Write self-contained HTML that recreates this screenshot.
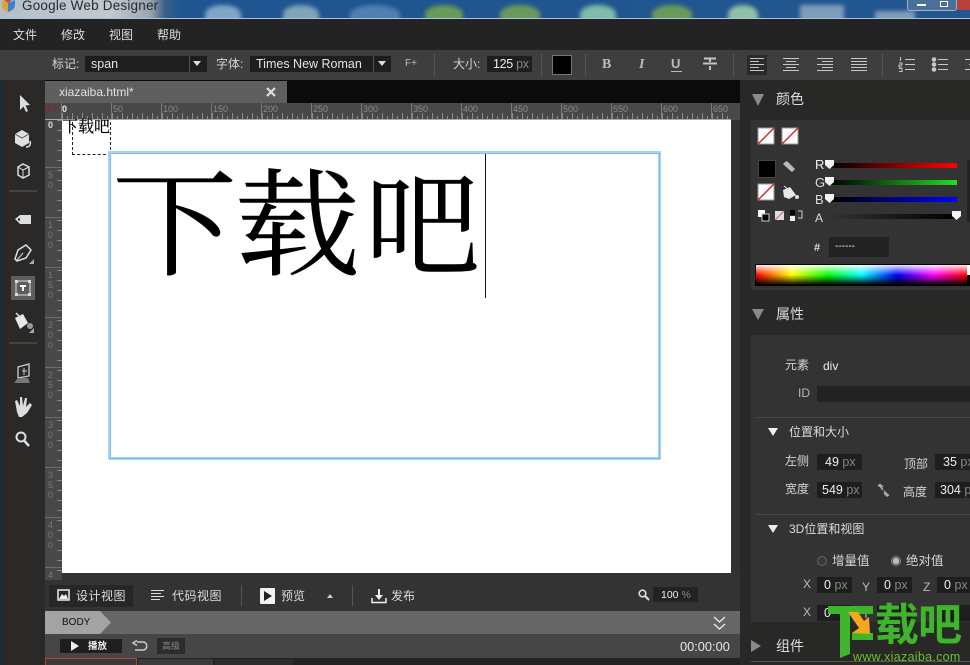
<!DOCTYPE html>
<html><head><meta charset="utf-8"><style>
html,body{margin:0;padding:0;width:970px;height:665px;overflow:hidden;background:#232323}
body{position:relative;font-family:"Liberation Sans","Noto Sans CJK SC",sans-serif;color:#d8d8d8}
.a{position:absolute}
.t{position:absolute;white-space:nowrap;font-size:12px;line-height:14px;color:#d4d4d4}
.f{position:absolute;background:#1e1e1e;color:#eee;font-size:12.5px;line-height:17px;height:16px;white-space:nowrap;overflow:hidden}
.f i{font-style:normal;color:#888}
svg{position:absolute;overflow:visible}
.r{position:absolute;font-size:9px;color:#8a8a8a;line-height:10px;top:104px}
.v{position:absolute;left:47px;width:7px;font-size:9px;line-height:10px;color:#777;text-align:center}
.blob{position:absolute;top:5px;height:18px;border-radius:50% 50% 0 0;filter:blur(2px)}
.big{position:absolute;top:153px;font-family:'Liberation Serif','Noto Serif CJK SC',serif;font-size:125px;line-height:150px;color:#000;transform:scaleY(.93);-webkit-text-stroke:.5px #000}
</style></head><body>
<!-- desktop title strip -->
<div class="a" style="left:0;top:0;width:970px;height:18px;background:linear-gradient(90deg,#b4bfcc 0,#c2c8cf 110px,#9aa6b2 150px,#3a5f85 165px,#1f5590 180px,#1f5590 400px,#23568f 970px);overflow:hidden">
<div class="blob" style="left:205px;width:36px;background:#7ea6c6"></div>
<div class="blob" style="left:283px;width:36px;background:#7ea6b8"></div>
<div class="blob" style="left:350px;width:50px;background:#4f80b0"></div>
<div class="blob" style="left:425px;width:38px;background:#6a9a5a"></div>
<div class="blob" style="left:500px;width:40px;background:#6a9a5a"></div>
<div class="blob" style="left:580px;width:36px;background:#80bca8"></div>
<div class="blob" style="left:652px;width:40px;background:#6a9a5a"></div>
<div class="blob" style="left:728px;width:30px;background:#8fc0a8"></div>
<div class="blob" style="left:800px;width:44px;background:#7f9dbd;border-radius:2px"></div>
<div class="blob" style="left:875px;width:40px;top:11px;background:#7f9dbd;border-radius:2px"></div>
</div>
<div class="a" style="left:0;top:18px;width:970px;height:1px;background:#a8c4dc"></div>
<svg style="left:0;top:0" width="16" height="13"><path d="M2 0L8 3L8 12C4 11 2 8 2 5Z" fill="#d9a82e"/><path d="M8 3L15 0V5C15 8 12 11 8 12Z" fill="#3f7fd0"/><path d="M4 0H12L8 3Z" fill="#d04a38"/></svg>
<div class="t" style="left:22px;top:-2px;font-size:13.5px;line-height:15px;color:#2a2a2a;letter-spacing:.2px">Google Web Designer</div>
<div class="a" style="left:907px;top:0;width:48px;height:10px;background:#4a6f98;border:1px solid #9db3c8;border-top:0;border-radius:0 0 3px 3px"></div>
<div class="a" style="left:957px;top:0;width:13px;height:10px;background:#b8403a"></div>
<div class="a" style="left:917px;top:4px;width:9px;height:2px;background:#fff"></div>
<div class="a" style="left:940px;top:1px;width:6px;height:4px;border:1px solid #fff"></div>

<!-- menu -->
<div class="a" style="left:0;top:19px;width:970px;height:31px;background:#232323"></div>
<div class="t" style="left:13px;top:28px;color:#ddd">文件</div>
<div class="t" style="left:61px;top:28px;color:#ddd">修改</div>
<div class="t" style="left:109px;top:28px;color:#ddd">视图</div>
<div class="t" style="left:157px;top:28px;color:#ddd">帮助</div>

<!-- toolbar -->
<div class="a" style="left:0;top:50px;width:970px;height:30px;background:#3e3e3e"></div>
<div class="t" style="left:52px;top:57px">标记:</div>
<div class="f" style="left:85px;top:56px;width:104px;font-size:12.5px;text-indent:6px;color:#e4e4e4">span</div>
<div class="a" style="left:189px;top:56px;width:18px;height:16px;background:#1e1e1e;border-left:1px solid #555;box-sizing:border-box"></div>
<div class="a" style="left:193px;top:61px;border:4px solid transparent;border-top:5px solid #ddd;border-bottom:0"></div>
<div class="t" style="left:216px;top:57px">字体:</div>
<div class="f" style="left:250px;top:56px;width:123px;font-size:12.5px;text-indent:6px;color:#e4e4e4">Times New Roman</div>
<div class="a" style="left:373px;top:56px;width:18px;height:16px;background:#1e1e1e;border-left:1px solid #555;box-sizing:border-box"></div>
<div class="a" style="left:378px;top:61px;border:4px solid transparent;border-top:5px solid #ddd;border-bottom:0"></div>
<div class="t" style="left:405px;top:57px;font-size:10px;color:#bbb">F+</div>
<div class="a" style="left:434px;top:54px;width:1px;height:22px;background:#565656"></div>
<div class="t" style="left:453px;top:57px">大小:</div>
<div class="f" style="left:487px;top:56px;width:45px;font-size:12.5px;text-indent:6px;letter-spacing:-.3px">125 <i>px</i></div>
<div class="a" style="left:541px;top:54px;width:1px;height:22px;background:#565656"></div>
<div class="a" style="left:552px;top:55px;width:18px;height:18px;background:#000;border:1px solid #777"></div>
<div class="a" style="left:585px;top:54px;width:1px;height:22px;background:#565656"></div>
<div class="t" style="left:602px;top:57px;font:bold 14px/16px 'Liberation Serif',serif;color:#bcbcbc">B</div>
<div class="t" style="left:639px;top:57px;font:italic bold 14px/16px 'Liberation Serif',serif;color:#bcbcbc">I</div>
<div class="t" style="left:671px;top:56px;font:bold 13px/15px 'Liberation Sans',sans-serif;color:#bcbcbc">U</div>
<div class="a" style="left:671px;top:71px;width:11px;height:1px;background:#bcbcbc"></div>
<svg style="left:702px;top:57px" width="16" height="14"><path d="M2 1.500H14M8 2V5M1 6.500H15M8 9V13" stroke="#c4c4c4" stroke-width="2" fill="none"/></svg>
<div class="a" style="left:733px;top:54px;width:1px;height:22px;background:#565656"></div>
<div class="a" style="left:747px;top:55px;width:20px;height:20px;background:#2a2a2a"></div>
<svg style="left:749px;top:57px" width="120" height="15" stroke="#c8c8c8" stroke-width="1" fill="none">
<path d="M1 1.500H15M1 4.500H10M1 7.500H15M1 10.500H10M1 13.500H15"/>
<path d="M34 1.500H50M37 4.500H47M34 7.500H50M37 10.500H47M34 13.500H50"/>
<path d="M68 1.500H84M73 4.500H84M68 7.500H84M73 10.500H84M68 13.500H84"/>
<path d="M102 1.500H118M102 4.500H118M102 7.500H118M102 10.500H118M102 13.500H118"/>
</svg>
<div class="a" style="left:882px;top:54px;width:1px;height:22px;background:#565656"></div>
<svg style="left:899px;top:57px" width="71" height="15" stroke="#c8c8c8" stroke-width="1" fill="none">
<path d="M6 2.500H16M6 7.500H16M6 12.500H16M1.500 0V4M0 6H3V8H0V10H3M0 11.500H3V14.500H0"/>
<path d="M39 2.500H49M39 7.500H49M39 12.500H49"/>
<circle cx="35" cy="2.500" r="1.800" fill="#c8c8c8"/><circle cx="35" cy="7.500" r="1.800" fill="#c8c8c8"/><circle cx="35" cy="12.500" r="1.800" fill="#c8c8c8"/>
<path d="M66 2.500H77M70 7.500H77M66 12.500H77"/>
</svg>

<!-- left tools -->
<div class="a" style="left:0;top:80px;width:45px;height:585px;background:#2a2927"></div>
<div class="a" style="left:0;top:80px;width:2px;height:585px;background:#1d2b36"></div>
<svg style="left:0;top:80px" width="45" height="385">
<path d="M20 15L20 30L23.500 26.500L26 32L28 31L25.500 25.500L30 25Z" fill="#ddd"/>
<path d="M15 54L22 50L29 54V63L22 67L15 63Z" fill="#e0e0e0"/><path d="M15 54L22 58L29 54" stroke="#555" fill="none"/><path d="M26 67C30 67 31 64 30 61" stroke="#ddd" stroke-width="1.500" fill="none"/>
<path d="M18 87L23 84L29 87V95L23 98L18 95Z" fill="none" stroke="#ddd" stroke-width="1.500"/><path d="M18 87L23 90L29 87M23 90V98" stroke="#ddd" fill="none"/>
<path d="M9 111H37" stroke="#5a5a5a"/>
<path d="M15 139L20 135H31V144H20Z" fill="#ddd"/><circle cx="19" cy="139.500" r="1.200" fill="#2a2927"/>
<path d="M15 179L18 170L26 165L31 170L26 178L17 181Z" fill="none" stroke="#ddd" stroke-width="1.500"/><path d="M17 180L23 173" stroke="#ddd"/><path d="M29 184H34V179Z" fill="#aaa"/>
<rect x="11" y="196" width="24" height="24" fill="#5e5e5e"/>
<rect x="16" y="201" width="14" height="14" fill="none" stroke="#ddd"/><rect x="15" y="200" width="3" height="3" fill="#ddd"/><rect x="28" y="200" width="3" height="3" fill="#ddd"/><rect x="15" y="213" width="3" height="3" fill="#ddd"/><rect x="28" y="213" width="3" height="3" fill="#ddd"/>
<path d="M20 205H26V207H24V211H22V207H20Z" fill="#fff"/>
<path d="M15 238L23 234L28 243L20 249Z" fill="#e8e8e8"/><path d="M16 233L21 238" stroke="#ddd" stroke-width="1.500"/><circle cx="30" cy="246" r="3" fill="#999"/><path d="M29 253H34V248Z" fill="#aaa"/>
<path d="M9 263H37" stroke="#5a5a5a"/>
<path d="M18 287L29 284V296L18 298Z" fill="none" stroke="#ccc" stroke-width="1.300"/><path d="M22 291H27M24 288V295" stroke="#ccc"/><path d="M14 303L18 298H28L30 303Z" fill="#777"/>
<path d="M17 332L15 321L17 320L20 326L20 317H22L23 326L25 318H27L26 327L30 323L32 325L27 333L22 337H19Z" fill="#ddd"/>
<circle cx="21" cy="357" r="4.500" fill="none" stroke="#ddd" stroke-width="2"/><path d="M24.500 361L29 366" stroke="#ddd" stroke-width="2.500"/>
</svg>

<!-- tab strip -->
<div class="a" style="left:45px;top:80px;width:695px;height:23px;background:#0b0b0b"></div>
<div class="a" style="left:45px;top:81px;width:242px;height:22px;background:#5f5f5f"></div>
<div class="t" style="left:59px;top:85px;font-size:12px;color:#e2e2e2">xiazaiba.html*</div>
<svg style="left:266px;top:87px" width="10" height="10"><path d="M1 1L9 9M9 1L1 9" stroke="#ddd" stroke-width="2.200"/></svg>

<!-- top ruler -->
<div class="a" style="left:45px;top:103px;width:695px;height:16px;background:#484848"></div>
<div class="a" style="left:62px;top:116px;width:678px;height:3px;background:repeating-linear-gradient(90deg,#8a8a8a 0,#8a8a8a 1px,transparent 1px,transparent 5px)"></div>
<div class="a" style="left:62px;top:113px;width:678px;height:6px;background:repeating-linear-gradient(90deg,#8a8a8a 0,#8a8a8a 1px,transparent 1px,transparent 10px)"></div>
<div class="a" style="left:61px;top:103px;width:679px;height:16px;background:repeating-linear-gradient(90deg,#7a7a7a 0,#7a7a7a 1px,transparent 1px,transparent 50px)"></div>
<div class="a" style="left:45px;top:119px;width:695px;height:1px;background:#aaa"></div>
<div class="t" style="left:45px;top:103px;font:bold 9px/13px 'Liberation Sans',sans-serif;color:#8c2430;letter-spacing:1px">XY</div>
<div class="t" style="left:62px;top:103px;font:bold 9px/13px 'Liberation Sans',sans-serif;color:#eee">0</div>
<div class="r" style="left:113px">50</div><div class="r" style="left:163px">100</div><div class="r" style="left:213px">150</div><div class="r" style="left:263px">200</div><div class="r" style="left:313px">250</div><div class="r" style="left:363px">300</div><div class="r" style="left:413px">350</div><div class="r" style="left:463px">400</div><div class="r" style="left:513px">450</div><div class="r" style="left:563px">500</div><div class="r" style="left:613px">550</div><div class="r" style="left:663px">600</div><div class="r" style="left:713px">650</div>

<!-- left ruler -->
<div class="a" style="left:45px;top:120px;width:17px;height:460px;background:#484848"></div>
<div class="a" style="left:57px;top:120px;width:5px;height:460px;background:repeating-linear-gradient(180deg,#8a8a8a 0,#8a8a8a 1px,transparent 1px,transparent 10px)"></div>
<div class="a" style="left:45px;top:118px;width:17px;height:462px;background:repeating-linear-gradient(180deg,transparent 0,transparent 49px,#6c6c6c 49px,#6c6c6c 50px)"></div>
<div class="v" style="top:121px;color:#ddd;font-weight:bold;line-height:9px">0</div>
<div class="v" style="top:170px">5<br>0</div><div class="v" style="top:220px">1<br>0<br>0</div><div class="v" style="top:270px">1<br>5<br>0</div><div class="v" style="top:320px">2<br>0<br>0</div><div class="v" style="top:370px">2<br>5<br>0</div><div class="v" style="top:420px">3<br>0<br>0</div><div class="v" style="top:470px">3<br>5<br>0</div><div class="v" style="top:520px">4<br>0<br>0</div><div class="v" style="top:570px">4</div>

<!-- canvas -->
<div class="a" style="left:62px;top:120px;width:669px;height:453px;background:#fff"></div>
<div class="a" style="left:731px;top:103px;width:9px;height:470px;background:#303030"></div>
<div class="a" style="left:731px;top:103px;width:9px;height:17px;background:#484848"></div>
<div class="a" style="left:72px;top:122px;width:37px;height:32px;border:1px dashed #222;border-top:0"></div>
<div class="t" style="left:62px;top:119px;font-family:'Liberation Serif','Noto Serif CJK SC',serif;font-size:16px;line-height:18px;color:#000;-webkit-text-stroke:.2px #000">下载吧</div>
<div class="a" style="left:108px;top:151px;width:547px;height:303px;border:3px solid #a6d4f7"></div>
<div class="a" style="left:110px;top:153px;width:548px;height:304px;border:1px solid #80bcec"></div>
<div class="big" style="left:112px">下</div>
<div class="big" style="left:235px">载</div>
<div class="big" style="left:360px;transform:scale(.92,.9)">吧</div>
<div class="a" style="left:485px;top:154px;width:1px;height:144px;background:#111"></div>

<!-- bottom bar -->
<div class="a" style="left:62px;top:573px;width:678px;height:39px;background:#333"></div>
<div class="a" style="left:45px;top:580px;width:17px;height:32px;background:#333"></div>
<div class="a" style="left:49px;top:585px;width:84px;height:22px;background:#272727"></div>
<svg style="left:57px;top:589px" width="14" height="13"><rect x="1" y="1" width="11" height="10" fill="none" stroke="#eee" stroke-width="1.500"/><path d="M2 10L5 5L7 7L9 5L11 10Z" fill="#eee"/></svg>
<div class="t" style="left:76px;top:589px;letter-spacing:.5px;color:#ddd">设计视图</div>
<svg style="left:151px;top:590px" width="14" height="11"><path d="M0 .5H13M0 3.500H10M0 6.500H13M0 9.500H9" stroke="#ddd"/></svg>
<div class="t" style="left:172px;top:589px;letter-spacing:.5px;color:#ddd">代码视图</div>
<div class="a" style="left:241px;top:585px;width:1px;height:21px;background:#555"></div>
<div class="a" style="left:260px;top:588px;width:15px;height:16px;background:#f2f2f2;border-radius:1px"></div>
<div class="a" style="left:264px;top:591px;border:5px solid transparent;border-left:8px solid #222;border-right:0"></div>
<div class="t" style="left:281px;top:589px;color:#ddd">预览</div>
<div class="a" style="left:327px;top:594px;border:3.500px solid transparent;border-bottom:4px solid #ccc;border-top:0"></div>
<div class="a" style="left:352px;top:585px;width:1px;height:21px;background:#555"></div>
<svg style="left:371px;top:589px" width="16" height="15"><path d="M8 0V8" stroke="#eee" stroke-width="2"/><path d="M4 6H12L8 11Z" fill="#eee"/><path d="M1 9V13.500H15V9" fill="none" stroke="#eee" stroke-width="1.500"/></svg>
<div class="t" style="left:391px;top:589px;color:#ddd">发布</div>
<svg style="left:638px;top:589px" width="12" height="12"><circle cx="4.500" cy="4.500" r="3.300" fill="none" stroke="#ddd" stroke-width="1.600"/><path d="M7 7L11 11" stroke="#ddd" stroke-width="2"/></svg>
<div class="f" style="left:653px;top:587px;width:45px;height:15px;font-size:10.500px;line-height:16px;text-indent:8px;background:#222">100 <i>%</i></div>

<!-- body bar -->
<div class="a" style="left:45px;top:611px;width:695px;height:23px;background:#666"></div>
<svg style="left:45px;top:611px" width="66" height="23"><path d="M0 0H55L66 11.500L55 23H0Z" fill="#a3a3a3"/></svg>
<div class="t" style="left:62px;top:617px;font-size:10px;line-height:12px;color:#111">BODY</div>
<svg style="left:713px;top:616px" width="13" height="14"><path d="M1 1L6.500 6L12 1M1 8L6.500 13L12 8" stroke="#eee" stroke-width="1.300" fill="none"/></svg>

<!-- timeline -->
<div class="a" style="left:45px;top:634px;width:695px;height:24px;background:#464646"></div>
<div class="a" style="left:60px;top:639px;width:62px;height:14px;background:#1e1e1e"></div>
<div class="a" style="left:71px;top:641px;border:5px solid transparent;border-left:8px solid #eee;border-right:0"></div>
<div class="t" style="left:88px;top:640px;font-size:9.500px;line-height:13px;color:#eee;font-weight:bold">播放</div>
<svg style="left:132px;top:640px" width="16" height="13"><path d="M5 2H11C16 2 16 10 11 10H3M5 .5L1 3L5 5.500" fill="none" stroke="#ccc" stroke-width="1.500"/></svg>
<div class="a" style="left:157px;top:638px;width:28px;height:16px;background:#2c2c2c"></div>
<div class="t" style="left:162px;top:640px;font-size:9px;line-height:13px;color:#888">高级</div>
<div class="t" style="left:680px;top:640px;font-size:12.800px;color:#e8e8e8">00:00:00</div>
<div class="a" style="left:45px;top:658px;width:92px;height:7px;background:#3a3a3a;border:1px solid #a84a3a;border-bottom:0;box-sizing:border-box"></div>
<div class="a" style="left:138px;top:659px;width:75px;height:6px;background:#3a3a3a"></div>
<div class="a" style="left:215px;top:659px;width:78px;height:6px;background:#2c2c2c"></div>

<!-- right panel -->
<div class="a" style="left:740px;top:80px;width:230px;height:585px;background:#282827"></div>
<div class="a" style="left:751px;top:120px;width:219px;height:170px;background:#333"></div>
<div class="a" style="left:752px;top:94px;border:6.500px solid transparent;border-top:12px solid #8a8a8a;border-bottom:0;width:0;height:0"></div>
<div class="t" style="left:776px;top:91px;font-size:14px;line-height:16px;color:#ddd">颜色</div>
<svg style="left:757px;top:127px" width="60" height="20"><rect x="1" y="1" width="16" height="16" fill="#fff" stroke="#999"/><path d="M1 17L17 1" stroke="#d8282c" stroke-width="1.500"/><rect x="25" y="1" width="16" height="16" fill="#fff" stroke="#999"/><path d="M25 17L41 1" stroke="#d8282c" stroke-width="1.500"/></svg>
<div class="a" style="left:758px;top:160px;width:16px;height:16px;background:#000;border:1px solid #444"></div>
<svg style="left:757px;top:160px" width="60" height="65">
<path d="M27 3L36 11L38 9L30 1Z" fill="#bbb"/><path d="M27 3L36 11" stroke="#bbb" stroke-width="3"/>
<rect x="1" y="24" width="16" height="16" fill="#fff" stroke="#999"/><path d="M1 40L17 24" stroke="#d8282c" stroke-width="1.500"/>
<path d="M26 30L33 27L39 35L32 39L27 37Z" fill="#e8e8e8"/><circle cx="40" cy="37" r="2" fill="#ddd"/><path d="M27 26L32 30" stroke="#ddd"/>
<rect x="1" y="50" width="7" height="7" fill="#fff"/><rect x="5" y="54" width="7" height="7" fill="#000" stroke="#ccc"/>
<rect x="18" y="51" width="9" height="9" fill="#ddd"/><path d="M18 60L27 51" stroke="#c66"/>
<rect x="33" y="50" width="5" height="5" fill="#000"/><rect x="33" y="56" width="5" height="5" fill="#eee"/><path d="M41 51H45V58H41" fill="none" stroke="#ccc"/>
</svg>
<div class="t" style="left:815px;top:158px;color:#eee;font-size:13px">R</div>
<div class="t" style="left:815px;top:176px;color:#ddd;font-size:13px">G</div>
<div class="t" style="left:815px;top:193px;color:#ddd;font-size:13px">B</div>
<div class="t" style="left:815px;top:211px;color:#ddd;font-size:12px">A</div>
<div class="a" style="left:830px;top:163px;width:127px;height:5px;background:linear-gradient(90deg,#000,#f00)"></div>
<div class="a" style="left:830px;top:180px;width:127px;height:5px;background:linear-gradient(90deg,#000,#1fe01f)"></div>
<div class="a" style="left:830px;top:197px;width:127px;height:5px;background:linear-gradient(90deg,#000,#00f)"></div>
<div class="a" style="left:830px;top:214px;width:127px;height:5px;background:linear-gradient(90deg,#333,#000)"></div>
<svg style="left:825px;top:160px" width="140" height="64" fill="#f4f4f4"><path d="M0 0H9V5L4.500 9L0 5Z"/><path d="M0 17H9V22L4.500 26L0 22Z"/><path d="M0 34H9V39L4.500 43L0 39Z"/><path d="M127 51H136V56L131.500 60L127 56Z"/></svg>
<div class="a" style="left:967px;top:160px;width:3px;height:62px;background:#222"></div>
<div class="t" style="left:814px;top:241px;font-weight:bold;font-size:11px;color:#ddd">#</div>
<div class="a" style="left:829px;top:237px;width:60px;height:20px;background:#222"></div>
<div class="t" style="left:835px;top:240px;font-size:10px;color:#eee">------</div>
<div class="a" style="left:755px;top:264px;width:215px;height:22px;background:#000"></div>
<div class="a" style="left:756px;top:265px;width:211px;height:20px;background:linear-gradient(180deg,rgba(255,255,255,.9) 0,rgba(255,255,255,0) 50%,rgba(0,0,0,0) 50%,#000 100%),linear-gradient(90deg,#f00 0,#ff0 17%,#0f0 34%,#0ff 50%,#00f 67%,#f0f 84%,#f00 100%)"></div>
<div class="a" style="left:967px;top:265px;width:3px;height:10px;background:#fff"></div>

<div class="a" style="left:752px;top:309px;width:0;height:0;border:6.500px solid transparent;border-top:11px solid #8a8a8a;border-bottom:0"></div>
<div class="t" style="left:776px;top:306px;font-size:14px;line-height:16px;color:#ddd">属性</div>
<div class="a" style="left:751px;top:335px;width:219px;height:287px;background:#333"></div>
<div class="t" style="left:785px;top:358px">元素</div>
<div class="t" style="left:823px;top:359px;color:#eee;font-size:12px">div</div>
<div class="t" style="left:798px;top:386px;color:#b8b8b8">ID</div>
<div class="a" style="left:817px;top:386px;width:153px;height:16px;background:#222"></div>
<div class="a" style="left:757px;top:417px;width:213px;height:1px;background:#4a4a4a"></div>
<div class="a" style="left:768px;top:428px;width:0;height:0;border:5px solid transparent;border-top:8px solid #eee;border-bottom:0"></div>
<div class="t" style="left:789px;top:425px;color:#ddd">位置和大小</div>
<div class="t" style="left:785px;top:454px">左侧</div>
<div class="f" style="left:817px;top:454px;width:45px;text-indent:8px">49 <i>px</i></div>
<div class="t" style="left:904px;top:457px">顶部</div>
<div class="f" style="left:935px;top:454px;width:35px;text-indent:8px">35 <i>px</i></div>
<div class="t" style="left:785px;top:482px">宽度</div>
<div class="f" style="left:817px;top:482px;width:45px;text-indent:5px">549 <i>px</i></div>
<svg style="left:876px;top:483px" width="15" height="15"><path d="M2 3L4 1.500L7 4M8 10L11 13L13 11.500M3 2L7 7M8 8L12 12" fill="none" stroke="#aaa" stroke-width="1.500"/></svg>
<div class="t" style="left:903px;top:485px">高度</div>
<div class="f" style="left:935px;top:482px;width:35px;text-indent:5px">304 <i>p</i></div>
<div class="a" style="left:757px;top:514px;width:213px;height:1px;background:#4a4a4a"></div>
<div class="a" style="left:768px;top:525px;width:0;height:0;border:5px solid transparent;border-top:8px solid #eee;border-bottom:0"></div>
<div class="t" style="left:789px;top:522px;color:#ddd">3D位置和视图</div>
<div class="a" style="left:817px;top:556px;width:8px;height:8px;border-radius:50%;border:1px solid #666;background:#3a3a3a"></div>
<div class="t" style="left:832px;top:554px;font-size:12.500px">增量值</div>
<div class="a" style="left:891px;top:556px;width:8px;height:8px;border-radius:50%;border:1px solid #888;background:radial-gradient(circle,#bbb 0,#bbb 3px,#444 3.500px)"></div>
<div class="t" style="left:906px;top:554px;font-size:12.500px">绝对值</div>
<div class="t" style="left:803px;top:577px;color:#bbb">X</div>
<div class="f" style="left:817px;top:577px;width:35px;text-indent:7px">0 <i>px</i></div>
<div class="t" style="left:862px;top:580px;color:#bbb">Y</div>
<div class="f" style="left:877px;top:577px;width:35px;text-indent:7px">0 <i>px</i></div>
<div class="t" style="left:923px;top:580px;color:#bbb">Z</div>
<div class="f" style="left:937px;top:577px;width:33px;text-indent:7px">0 <i>px</i></div>
<div class="t" style="left:803px;top:605px;color:#bbb">X</div>
<div class="f" style="left:817px;top:605px;width:35px;text-indent:7px">0</div>
<div class="t" style="left:862px;top:607px;color:#bbb">Y</div>
<div class="f" style="left:877px;top:605px;width:35px"></div>
<div class="f" style="left:937px;top:605px;width:33px"></div>
<div class="a" style="left:751px;top:640px;width:0;height:0;border:6px solid transparent;border-left:10px solid #8a8a8a;border-right:0"></div>
<div class="t" style="left:776px;top:638px;font-size:14px;line-height:16px;color:#ddd">组件</div>
<div class="a" style="left:751px;top:661px;width:219px;height:1px;background:#555"></div>

<!-- watermark -->
<svg style="left:828px;top:604px" width="46" height="56"><path d="M0 2H45V10H22V50L12 54V10H0Z" fill="#3eb52a"/><path d="M24 29H45V36H24Z" fill="#3eb52a"/><path d="M20 8L30 8L36 17L41 13L42 30L24 29L31 24Z" fill="#f5a81c"/></svg>
<div class="t" style="left:875px;top:600px;font-size:44px;line-height:52px;font-weight:bold;color:#3eb52a;letter-spacing:-1px;transform:scale(1,1);transform-origin:left">载吧</div>
<div class="t" style="left:853px;top:650px;font-size:12.500px;line-height:14px;color:#6cbf2f;letter-spacing:.3px">www.xiazaiba.com</div>
</body></html>
